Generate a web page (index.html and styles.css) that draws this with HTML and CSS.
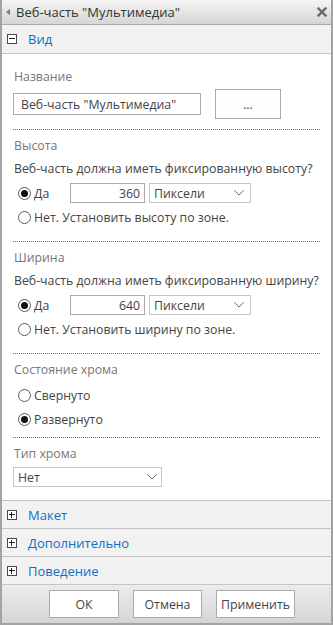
FILE: index.html
```html
<!DOCTYPE html>
<html lang="ru">
<head>
<meta charset="utf-8">
<title>Веб-часть</title>
<link rel="stylesheet" href="styles.css">
</head>
<body>
<div class="panel">
  <div class="titlebar">
    <span class="tri"></span>
    <span class="title">Веб-часть "Мультимедиа"</span>
    <svg class="close" width="10" height="10" viewBox="0 0 10 10"><path d="M1.5 1.5 L8.5 8.5 M8.5 1.5 L1.5 8.5" stroke="#6a6a6a" stroke-width="2.4" stroke-linecap="square"/></svg>
  </div>
  <div class="sechead open"><span class="box minus"></span><span class="sectitle">Вид</span></div>
  <div class="content">
    <div class="block first">
      <div class="label">Название</div>
      <div class="namerow">
        <div class="textbox name">Веб-часть "Мультимедиа"</div>
        <div class="btn dots">...</div>
      </div>
    </div>
    <div class="block">
      <div class="label">Высота</div>
      <div class="question">Веб-часть должна иметь фиксированную высоту?</div>
      <div class="radiorow">
        <span class="radio checked"></span><span class="rlabel short">Да</span>
        <div class="textbox num">360</div>
        <div class="select units"><span>Пиксели</span><svg class="chev" width="10" height="6" viewBox="0 0 10 6"><path d="M0.5 0.5 L5 5 L9.5 0.5" fill="none" stroke="#666" stroke-width="1"/></svg></div>
      </div>
      <div class="radiorow"><span class="radio"></span><span class="rlabel">Нет. Установить высоту по зоне.</span></div>
    </div>
    <div class="block">
      <div class="label">Ширина</div>
      <div class="question">Веб-часть должна иметь фиксированную ширину?</div>
      <div class="radiorow">
        <span class="radio checked"></span><span class="rlabel short">Да</span>
        <div class="textbox num">640</div>
        <div class="select units"><span>Пиксели</span><svg class="chev" width="10" height="6" viewBox="0 0 10 6"><path d="M0.5 0.5 L5 5 L9.5 0.5" fill="none" stroke="#666" stroke-width="1"/></svg></div>
      </div>
      <div class="radiorow"><span class="radio"></span><span class="rlabel">Нет. Установить ширину по зоне.</span></div>
    </div>
    <div class="block chrome">
      <div class="label">Состояние хрома</div>
      <div class="radiorow gapped"><span class="radio"></span><span class="rlabel">Свернуто</span></div>
      <div class="radiorow"><span class="radio checked"></span><span class="rlabel">Развернуто</span></div>
    </div>
    <div class="block last">
      <div class="label">Тип хрома</div>
      <div class="select ctype"><span>Нет</span><svg class="chev" width="10" height="6" viewBox="0 0 10 6"><path d="M0.5 0.5 L5 5 L9.5 0.5" fill="none" stroke="#666" stroke-width="1"/></svg></div>
    </div>
  </div>
  <div class="sechead closed"><span class="box plus"></span><span class="sectitle">Макет</span></div>
  <div class="sechead closed"><span class="box plus"></span><span class="sectitle">Дополнительно</span></div>
  <div class="sechead closed"><span class="box plus"></span><span class="sectitle">Поведение</span></div>
  <div class="footer">
    <div class="btn ok">ОК</div>
    <div class="btn cancel">Отмена</div>
    <div class="btn apply">Применить</div>
  </div>
</div>
</body>
</html>
```
FILE: styles.css
```css
* { box-sizing: border-box; }
html, body { margin: 0; padding: 0; background: #fff; }
body {
  font-family: "Open Sans", "Noto Sans", sans-serif;
  font-size: 12.3px;
  color: #444;
}
.panel {
  width: 333px;
  height: 625px;
  border-left: 2px solid #a3a3a3;
  border-right: 2px solid #a3a3a3;
  border-bottom: 2px solid #a3a3a3;
  display: flex;
  flex-direction: column;
  background: #fff;
}
.titlebar {
  height: 25px;
  flex: none;
  display: flex;
  align-items: center;
  background: linear-gradient(#f4f4f4, #d6d6d6);
  border-bottom: 1px solid #a9a9a9;
  padding-left: 4px;
}
.tri {
  width: 0; height: 0;
  border-top: 3px solid transparent;
  border-bottom: 3px solid transparent;
  border-right: 4px solid #7a7a7a;
  margin-right: 6px;
}
.title { font-size: 13px; color: #333; flex: 1; }
.close { margin-right: 4px; }
.sechead {
  height: 28px;
  flex: none;
  display: flex;
  align-items: center;
  background: #f2f2f2;
  padding-left: 5px;
}
.sechead.open { border-bottom: 1px solid #c4c4c4; height: 29px; }
.sechead.closed { border-top: 1px solid #c4c4c4; }
.box {
  width: 10px; height: 10px;
  border: 1px solid #4a4a4a;
  background: #fff;
  position: relative;
  margin-right: 11px;
}
.box::before {
  content: "";
  position: absolute;
  left: 1px; top: 3px;
  width: 6px; height: 1px;
  background: #222;
}
.plus::after {
  content: "";
  position: absolute;
  left: 3px; top: 1px;
  width: 1px; height: 6px;
  background: #222;
}
.sectitle { color: #0f6fc6; font-size: 13px; }
.content {
  flex: 1;
  padding: 0 11px;
}
.block {
  border-bottom: 1px dotted #3b73c4;
  padding: 5px 0 12px;
}
.block.first { padding: 12px 0 10px; }
.block.chrome { padding-bottom: 6px; }
.block.last { border-bottom: none; }
.label { line-height: 22px; height: 22px; color: #777; padding-left: 1px; }
.question { line-height: 24px; height: 24px; color: #444; padding-left: 1px; white-space: nowrap; }
.namerow { display: flex; align-items: center; margin-top: 1px; }
.textbox {
  border: 1px solid #ababab;
  background: #fff;
  display: flex;
  align-items: center;
}
.name { width: 188px; height: 22px; padding-left: 7px; }
.btn {
  border: 1px solid #ababab;
  background: #fdfdfd;
  display: flex;
  align-items: center;
  justify-content: center;
  color: #444;
}
.dots { width: 66px; height: 30px; margin-left: 14px; }
.radiorow {
  height: 24px;
  display: flex;
  align-items: center;
  padding-left: 5px;
  white-space: nowrap;
}
.radiorow.gapped { margin-top: 2px; }
.radio {
  width: 13px; height: 13px;
  border: 1px solid #5a5a5a;
  border-radius: 50%;
  background: #fff;
  position: relative;
  margin-right: 3px;
  flex: none;
}
.radio.checked::after {
  content: "";
  position: absolute;
  left: 2px; top: 2px;
  width: 7px; height: 7px;
  border-radius: 50%;
  background: #111;
}
.rlabel.short { width: 36px; }
.num { width: 75px; height: 20px; justify-content: flex-end; padding-right: 4px; }
.select {
  border: 1px solid #c6c6c6;
  background: #fff;
  height: 20px;
  display: flex;
  align-items: center;
  justify-content: space-between;
  padding: 0 4px 0 4px;
}
.units { width: 102px; margin-left: 4px; }
.units .chev { margin-right: 2px; }
.ctype { width: 149px; margin-top: 2px; }
.ctype .chev { margin-right: 0; }
.footer {
  height: 39px;
  flex: none;
  border-top: 1px solid #c4c4c4;
  background: linear-gradient(#ececec, #d5d5d5);
  display: flex;
  align-items: center;
  padding-left: 47px;
}
.footer .btn { height: 28px; background: #fff; }
.ok { width: 70px; }
.cancel { width: 69px; margin-left: 14px; }
.apply { width: 79px; margin-left: 14px; }
```
